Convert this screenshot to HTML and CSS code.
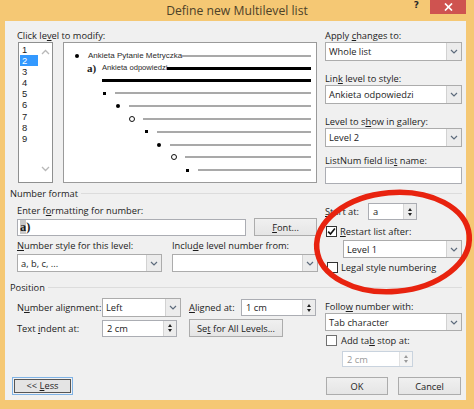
FILE: index.html
```html
<!DOCTYPE html>
<html lang="pl">
<head>
<meta charset="utf-8">
<title>Define new Multilevel list</title>
<link rel="stylesheet" href="styles.css">
</head>
<body>
<div class="window">
  <div class="titlebar">
    <div></div>
    <div class="title">Define new Multilevel list</div>
    <div class="controls">
      <span class="help">?</span>
      <span class="close"><svg width="9" height="8" viewBox="0 0 9 8"><path d="M1 0.5 L8 7.5 M8 0.5 L1 7.5" stroke="#fff" stroke-width="1.7"/></svg></span>
    </div>
  </div>
  <div class="client">
    <div class="sec top">
      <div class="lcol">
        <div class="lbl">Click le<u>v</u>el to modify:</div>
        <div class="boxes">
          <div class="listbox">
            <ul class="levels">
              <li>1</li><li class="sel">2</li><li>3</li><li>4</li><li>5</li><li>6</li><li>7</li><li>8</li><li>9</li>
            </ul>
            <div class="vscroll">
              <svg width="9" height="6" viewBox="0 0 9 6"><path d="M1 5 L4.5 1.5 L8 5" fill="none" stroke="#b8b8b8" stroke-width="1.3"/></svg>
              <svg width="9" height="6" viewBox="0 0 9 6"><path d="M1 1 L4.5 4.5 L8 1" fill="none" stroke="#b8b8b8" stroke-width="1.3"/></svg>
            </div>
          </div>
          <div class="preview">
            <div class="prow r1"><span class="dot"></span><span class="ptext t1">Ankieta Pytanie Metryczka</span><span class="gline"></span></div>
            <div class="prow r2"><span class="anum">a)</span><span class="ptext t2">Ankieta odpowiedzi</span><span class="bline"></span></div>
            <div class="prow r3"><span class="bline"></span></div>
            <div class="prow i1"><span class="bul"><span class="sq"></span></span><span class="gline"></span></div>
            <div class="prow i2"><span class="bul"><span class="dot"></span></span><span class="gline"></span></div>
            <div class="prow i3"><span class="bul"><span class="ring"></span></span><span class="gline"></span></div>
            <div class="prow i4"><span class="bul"><span class="sq"></span></span><span class="gline"></span></div>
            <div class="prow i5"><span class="bul"><span class="dot"></span></span><span class="gline"></span></div>
            <div class="prow i6"><span class="bul"><span class="ring"></span></span><span class="gline"></span></div>
            <div class="prow i7"><span class="bul"><span class="sq"></span></span><span class="gline"></span></div>
          </div>
        </div>
      </div>
      <div class="rcol">
        <div class="field">
          <div class="lbl">Apply <u>c</u>hanges to:</div>
          <div class="select h19"><span class="val">Whole list</span><span class="arr"><svg width="8" height="5" viewBox="0 0 8 5"><path d="M1 1 L4 4 L7 1" fill="none" stroke="#5d6b7c" stroke-width="1.2"/></svg></span></div>
        </div>
        <div class="field gap11">
          <div class="lbl">Lin<u>k</u> level to style:</div>
          <div class="select h19"><span class="val">Ankieta odpowiedzi</span><span class="arr"><svg width="8" height="5" viewBox="0 0 8 5"><path d="M1 1 L4 4 L7 1" fill="none" stroke="#5d6b7c" stroke-width="1.2"/></svg></span></div>
        </div>
        <div class="field gap11">
          <div class="lbl">Level to s<u>h</u>ow in gallery:</div>
          <div class="select h19"><span class="val">Level 2</span><span class="arr"><svg width="8" height="5" viewBox="0 0 8 5"><path d="M1 1 L4 4 L7 1" fill="none" stroke="#5d6b7c" stroke-width="1.2"/></svg></span></div>
        </div>
        <div class="field gap7">
          <div class="lbl">ListNum field lis<u>t</u> name:</div>
          <div class="textbox h17"></div>
        </div>
      </div>
    </div>

    <div class="grouphdr nf"><span>Number format</span><i class="rule"></i></div>
    <div class="sec">
      <div class="lcol">
        <div class="lbl mt4">Enter f<u>o</u>rmatting for number:</div>
        <div class="row mt1">
          <div class="textbox fmt"><span class="hl">a</span>)</div>
          <div class="btn fontbtn"><span><u>F</u>ont...</span></div>
        </div>
        <div class="row mt3">
          <div class="lbl nslbl"><u>N</u>umber style for this level:</div>
          <div class="lbl">Inclu<u>d</u>e level number from:</div>
        </div>
        <div class="row mt2">
          <div class="select h18 nsel"><span class="val">a, b, c, ...</span><span class="arr"><svg width="8" height="5" viewBox="0 0 8 5"><path d="M1 1 L4 4 L7 1" fill="none" stroke="#5d6b7c" stroke-width="1.2"/></svg></span></div>
          <div class="select h18 isel"><span class="val"></span><span class="arr"><svg width="8" height="5" viewBox="0 0 8 5"><path d="M1 1 L4 4 L7 1" fill="none" stroke="#5d6b7c" stroke-width="1.2"/></svg></span></div>
        </div>
      </div>
      <div class="rcol">
        <div class="row mt3 startrow">
          <div class="lbl startlbl"><u>S</u>tart at:</div>
          <div class="spin startspin"><span class="val">a</span><span class="spb"><i class="up"></i><i class="dn"></i></span></div>
        </div>
        <div class="chkrow mt5">
          <span class="chk"><svg width="9" height="9" viewBox="0 0 9 9"><path d="M1.2 4.6 L3.5 7 L7.9 1.5" fill="none" stroke="#111" stroke-width="1.6"/></svg></span>
          <span><u>R</u>estart list after:</span>
        </div>
        <div class="select h18 lvl1 mt3"><span class="val">Level 1</span><span class="arr"><svg width="8" height="5" viewBox="0 0 8 5"><path d="M1 1 L4 4 L7 1" fill="none" stroke="#5d6b7c" stroke-width="1.2"/></svg></span></div>
        <div class="chkrow mt3 legal">
          <span class="chk"></span>
          <span>Le<u>g</u>al style numbering</span>
        </div>
      </div>
    </div>

    <div class="grouphdr pos"><span>Position</span><i class="rule"></i></div>
    <div class="sec">
      <div class="lcol">
        <div class="row mt4 prow1">
          <div class="lbl plbl">N<u>u</u>mber alignment:</div>
          <div class="select h19 alsel"><span class="val">Left</span><span class="arr"><svg width="8" height="5" viewBox="0 0 8 5"><path d="M1 1 L4 4 L7 1" fill="none" stroke="#5d6b7c" stroke-width="1.2"/></svg></span></div>
          <div class="lbl alat"><u>A</u>ligned at:</div>
          <div class="spin alspin"><span class="val">1 cm</span><span class="spb"><i class="up"></i><i class="dn"></i></span></div>
        </div>
        <div class="row mt2 prow2">
          <div class="lbl plbl">Text <u>i</u>ndent at:</div>
          <div class="spin tispin"><span class="val">2 cm</span><span class="spb"><i class="up"></i><i class="dn"></i></span></div>
          <div class="btn setall"><span>Se<u>t</u> for All Levels...</span></div>
        </div>
      </div>
      <div class="rcol">
        <div class="lbl mt6">Follo<u>w</u> number with:</div>
        <div class="select h18"><span class="val">Tab character</span><span class="arr"><svg width="8" height="5" viewBox="0 0 8 5"><path d="M1 1 L4 4 L7 1" fill="none" stroke="#5d6b7c" stroke-width="1.2"/></svg></span></div>
        <div class="chkrow mt3 addtab">
          <span class="chk gray"></span>
          <span>Add ta<u>b</u> stop at:</span>
        </div>
        <div class="spin disabled tabspin"><span class="val">2 cm</span><span class="spb"><i class="up"></i><i class="dn"></i></span></div>
      </div>
    </div>

    <div class="buttons">
      <div class="lessbtn"><span class="inner"><span>&lt;&lt; <u>L</u>ess</span></span></div>
      <div class="spacer"></div>
      <div class="btn okbtn"><span>OK</span></div>
      <div class="btn cancelbtn"><span>Cancel</span></div>
    </div>
  </div>

  <svg class="annot" width="474" height="409" viewBox="0 0 474 409">
    <ellipse cx="393" cy="242" rx="76.5" ry="49.5" transform="rotate(-5 393 242)" fill="none" stroke="#e8230f" stroke-width="5.5"/>
  </svg>
</div>
</body>
</html>
```

FILE: styles.css
```css
* { box-sizing: border-box; margin: 0; padding: 0; }
html, body { width: 474px; height: 409px; overflow: hidden; }
body {
  font-family: "Open Sans", "Noto Sans", sans-serif;
  font-size: 9.3px;
  color: #1c1c1c;
  background: #f5c874;
}
u { text-decoration: underline; text-underline-offset: 1px; }

.window {
  width: 474px;
  height: 409px;
  background: #f5c874;
  position: relative;
}

/* title bar */
.titlebar {
  height: 21px;
  display: grid;
  grid-template-columns: 1fr auto 1fr;
  align-items: start;
}
.title {
  font-size: 12.2px;
  line-height: 21px;
  color: #4d4128;
  white-space: nowrap;
}
.controls {
  justify-self: end;
  display: flex;
  align-items: flex-start;
  margin-right: 8px;
}
.help {
  font-family: "DejaVu Sans", sans-serif;
  font-weight: bold;
  font-size: 9px;
  line-height: 11px;
  color: #2a2a2a;
  margin-right: 11px;
}
.close {
  width: 36px;
  height: 14px;
  background: #cf5350;
  display: flex;
  align-items: center;
  justify-content: center;
}

/* client area */
.client {
  margin: 0 8px 0 5px;
  height: 379px;
  background: #f0f0f0;
  padding: 8px 4px 0 5px;
}
.sec { display: flex; align-items: flex-start; }
.lcol { width: 315px; padding-left: 7px; flex: none; }
.rcol { width: 137px; flex: none; }
.row { display: flex; align-items: center; }
.lbl { height: 13px; line-height: 13px; white-space: nowrap; }

.mt1 { margin-top: 1px; }
.mt2 { margin-top: 2px; }
.mt3 { margin-top: 3px; }
.mt4 { margin-top: 4px; }
.mt5 { margin-top: 5px; }
.mt6 { margin-top: 6px; }
.gap11 { margin-top: 11px; }
.gap7 { margin-top: 7px; }

/* level list */
.boxes { display: flex; }
.listbox {
  width: 35px;
  height: 141px;
  margin-left: 1px;
  background: #fff;
  border: 1px solid #8e8f8f;
  display: flex;
}
.levels {
  list-style: none;
  width: 18px;
  padding-top: 1px;
  margin-left: 1px;
}
.levels li {
  height: 11.1px;
  line-height: 11.1px;
  padding-left: 2px;
  font-family: "Liberation Sans", Arial, sans-serif;
  font-size: 9.4px;
  overflow: hidden;
}
.levels li.sel { background: #3399ff; color: #fff; }
.vscroll {
  flex: 1;
  display: flex;
  flex-direction: column;
  justify-content: space-between;
  align-items: center;
  padding: 6px 0 10px;
}

/* preview */
.preview {
  width: 254px;
  height: 141px;
  margin-left: 10px;
  background: #fff;
  border: 1px solid #9a9a9a;
  padding: 7px 5px 0 0;
}
.prow { display: flex; align-items: center; height: 12.8px; }
.r1 { height: 12px; padding-left: 11px; }
.r2 { height: 12px; padding-left: 23px; }
.r3 { height: 13px; padding-left: 38px; }
.i1 { padding-left: 38px; }
.i2 { padding-left: 52px; }
.i3 { padding-left: 66px; }
.i4 { padding-left: 80px; }
.i5 { padding-left: 93px; }
.i6 { padding-left: 108px; }
.i7 { padding-left: 121px; }
.bul { width: 13px; flex: none; display: flex; align-items: center; }
.dot { width: 4px; height: 4px; border-radius: 50%; background: #000; flex: none; }
.sq { width: 3px; height: 3px; background: #000; margin-left: 1px; }
.ring { width: 6px; height: 6px; border-radius: 50%; border: 1px solid #111; margin-left: -1px; }
.ptext {
  font-family: "Liberation Sans", Arial, sans-serif;
  color: #2a2a2a;
  white-space: nowrap;
  line-height: 10px;
}
.t1 { font-size: 8px; margin-left: 9px; }
.t2 { font-size: 7.6px; }
.anum {
  width: 15px;
  flex: none;
  font-family: "Liberation Serif", "Times New Roman", serif;
  font-weight: bold;
  font-size: 11px;
  line-height: 10px;
}
.gline { flex: 1; height: 2px; background: #a9a9a9; }
.bline { flex: 1; height: 3px; background: #000; }

/* controls */
.select {
  display: flex;
  background: #fff;
  border: 1px solid #acacac;
}
.h19 { height: 19px; }
.h18 { height: 18px; }
.h17 { height: 17px; }
.select .val {
  flex: 1;
  padding-left: 3px;
  white-space: nowrap;
  overflow: hidden;
  display: flex;
  align-items: center;
}
.select .arr {
  width: 15px;
  flex: none;
  background: #ececec;
  border-left: 1px solid #d2d2d2;
  display: flex;
  align-items: center;
  justify-content: center;
}
.textbox {
  background: #fff;
  border: 1px solid #abadb3;
}
.spin {
  display: flex;
  height: 17px;
  background: #fff;
  border: 1px solid #abadb3;
}
.spin .val {
  flex: 1;
  padding-left: 4px;
  display: flex;
  align-items: center;
  white-space: nowrap;
}
.spb {
  width: 13px;
  flex: none;
  background: #ececec;
  border-left: 1px solid #d6d6d6;
  display: flex;
  flex-direction: column;
  justify-content: center;
  align-items: center;
  gap: 2px;
}
.spb i { display: block; width: 0; height: 0; border-left: 2.5px solid transparent; border-right: 2.5px solid transparent; }
.spb .up { border-bottom: 3px solid #222; }
.spb .dn { border-top: 3px solid #222; }
.spin.disabled { border-color: #c9d3de; }
.spin.disabled .val { color: #9a9a9a; }
.spin.disabled .spb { background: #f4f4f4; border-left-color: #e2e2e2; }
.spin.disabled .spb .up { border-bottom-color: #9a9a9a; }
.spin.disabled .spb .dn { border-top-color: #9a9a9a; }

.btn {
  display: flex;
  align-items: center;
  justify-content: center;
  border: 1px solid #acacac;
  background: linear-gradient(#f0f0f0, #e5e5e5);
  white-space: nowrap;
}

/* group headers */
.grouphdr {
  display: flex;
  align-items: center;
  height: 13px;
  line-height: 13px;
}
.grouphdr .rule {
  flex: 1;
  height: 1px;
  background: #dcdcdc;
  margin-left: 3px;
  margin-top: -1px;
}
.grouphdr.nf { margin-top: 3px; }
.grouphdr.pos { margin-top: 8px; }

/* number format */
.fmt {
  width: 229px;
  height: 17px;
  padding-left: 2px;
  font-family: "Liberation Serif", "Times New Roman", serif;
  font-weight: bold;
  font-size: 12.5px;
  line-height: 15px;
}
.fmt .hl { background: #c7c7c7; }
.fontbtn { width: 63px; height: 18px; margin-left: 8px; }
.nslbl { width: 155px; }
.nsel { width: 145px; }
.isel { width: 146px; margin-left: 10px; }

.startlbl { width: 43px; }
.startspin { width: 49px; }
.chkrow {
  display: flex;
  align-items: center;
  height: 12px;
  padding-left: 1px;
  white-space: nowrap;
}
.chk {
  width: 11px;
  height: 11px;
  flex: none;
  background: #fff;
  border: 1px solid #333;
  margin-right: 3px;
  display: flex;
  align-items: center;
  justify-content: center;
}
.chk.gray { border-color: #707070; margin-right: 4px; }
.legal { padding-left: 2px; }
.lvl1 { width: 119px; margin-left: 18px; }

/* position */
.plbl { width: 85px; }
.alsel { width: 79px; }
.alat { width: 52px; margin-left: 8px; }
.alspin { width: 75px; }
.tispin { width: 75px; }
.setall { width: 94px; height: 18px; margin-left: 12px; }
.addtab { height: 12px; margin-top: 3.5px; }
.tabspin { width: 71px; height: 16px; margin-left: 17px; margin-top: 4.5px; }

/* bottom buttons */
.buttons {
  display: flex;
  align-items: center;
  margin-top: 10px;
  height: 18px;
}
.lessbtn {
  width: 61px;
  height: 18px;
  margin-left: 2px;
  border: 1px solid #7fb3e6;
  padding: 1px;
  display: flex;
}
.lessbtn .inner {
  flex: 1;
  border: 1px solid #555;
  background: #e4e4e4;
  display: flex;
  align-items: center;
  justify-content: center;
  white-space: pre;
  line-height: 10px;
}
.spacer { flex: 1; }
.okbtn { width: 62px; height: 18px; }
.cancelbtn { width: 63px; height: 18px; margin-left: 10px; margin-right: 1px; }

/* annotation overlay */
.annot { position: absolute; left: 0; top: 0; pointer-events: none; }
```
